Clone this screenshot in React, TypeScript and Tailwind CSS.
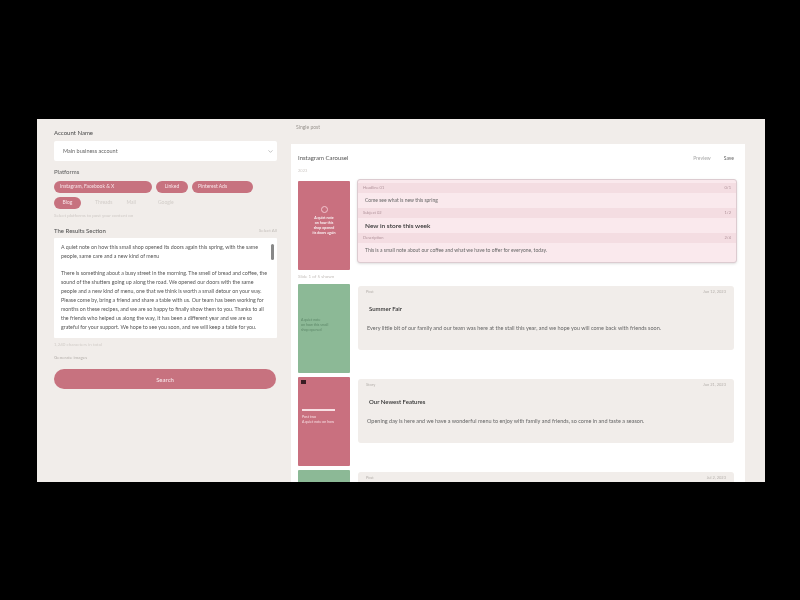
import React from "react";
import { ChevronDown } from "lucide-react";

function Thumb({ color, children }: { color: string; children?: React.ReactNode }) {
  return (
    <div className={`w-[52px] h-[89px] shrink-0 rounded-[1px] flex flex-col text-white ${color}`}>
      {children}
    </div>
  );
}

function PlainBox({ title, text, tag, time }: { title: string; text: string; tag: string; time: string }) {
  return (
    <div className="flex-1 h-[64px] mt-[2px] mr-[3px] bg-[#f1edea] rounded-[3px] px-[8px] pt-[3px]">
      <div className="flex justify-between text-[4px] leading-[6px] text-[#b5b0ac]">
        <span>{tag}</span>
        <span>{time}</span>
      </div>
      <div className="mt-[10px] ml-[3px] text-[6px] leading-[8px] font-semibold text-[#333]">{title}</div>
      <div className="mt-[11px] ml-[1px] text-[5.5px] leading-[8px] text-[#666] whitespace-nowrap">{text}</div>
    </div>
  );
}

function PinkRow({ label, time, children }: { label: string; time: string; children: React.ReactNode }) {
  return (
    <div>
      <div className="h-[10px] bg-[#f4dde2] px-[5px] flex justify-between items-center text-[4px] text-[#b0929a]">
        <span>{label}</span>
        <span>{time}</span>
      </div>
      <div className="h-[15px] px-[7px] flex items-center bg-[#fae9ed]">{children}</div>
    </div>
  );
}

export default function App() {
  return (
    <div className="w-[800px] h-[600px] bg-black pt-[119px] pl-[37px] overflow-hidden font-['Lato',sans-serif]">
      <div className="w-[728px] h-[363px] flex overflow-hidden bg-[#f1edea] blur-[0.7px]">
        <aside className="w-[250px] shrink-0 pl-[17px] pr-[10px] pt-[10px] flex flex-col">
          <div className="text-[6px] leading-[8px] font-medium text-[#555]">Account Name</div>
          <div className="mt-[4px] h-[20px] bg-white rounded-[2px] flex items-center justify-between pl-[9px] pr-[3px] text-[5.5px] text-[#666]">
            <span>Main business account</span>
            <ChevronDown size={7} className="text-[#999]" />
          </div>
          <div className="mt-[7px] text-[6px] leading-[8px] font-medium text-[#666]">Platforms</div>
          <div className="mt-[5px] flex gap-[4px]">
            <span className="h-[12px] w-[98px] rounded-full bg-[#c7727f] text-[#f8e4e8] text-[5px] flex items-center pl-[6px] whitespace-nowrap">Instagram, Facebook &amp; X</span>
            <span className="h-[12px] w-[32px] rounded-full bg-[#c7727f] text-[#f8e4e8] text-[5px] flex items-center justify-center">Linked</span>
            <span className="h-[12px] w-[61px] rounded-full bg-[#c7727f] text-[#f8e4e8] text-[5px] flex items-center pl-[6px]">Pinterest Ads</span>
          </div>
          <div className="mt-[4px] flex items-center gap-[14px] text-[5px] text-[#d2cdc9]">
            <span className="h-[12px] w-[27px] rounded-full bg-[#c7727f] text-[#f8e4e8] flex items-center justify-center">Blog</span>
            <span>Threads</span>
            <span>Mail</span>
            <span className="ml-[8px]">Google</span>
          </div>
          <div className="mt-[3px] text-[4.5px] leading-[7px] text-[#cfcac6]">Select platforms to post your content on</div>
          <div className="mt-[8px] flex justify-between items-center text-[6px] leading-[8px] font-medium text-[#555]">
            <span>The Results Section</span>
            <span className="text-[4.5px] font-normal text-[#c4bfbb]">Select All</span>
          </div>
          <div className="mt-[3px] relative h-[100px] bg-white overflow-hidden pl-[7px] pr-[8px] pt-[5px] text-[5.3px] leading-[9px] text-[#555] rounded-[1px]">
            <p className="pr-[4px]">A quiet note on how this small shop opened its doors again this spring, with the same people, same care and a new kind of menu</p>
            <p className="mt-[8px]">There is something about a busy street in the morning. The smell of bread and coffee, the sound of the shutters going up along the road. We opened our doors with the same people and a new kind of menu, one that we think is worth a small detour on your way. Please come by, bring a friend and share a table with us. Our team has been working for months on these recipes, and we are so happy to finally show them to you. Thanks to all the friends who helped us along the way, it has been a different year and we are so grateful for your support. We hope to see you soon, and we will keep a table for you.</p>
            <div className="absolute right-[3px] top-[6px] w-[3px] h-[16px] bg-[#888] rounded-full" />
          </div>
          <div className="mt-[3px] text-[4.5px] leading-[7px] text-[#d2cdc9]">1,240 characters in total</div>
          <div className="mt-[6px] text-[4.5px] leading-[7px] text-[#b5b0ac]">Generate images</div>
          <button className="mt-[8px] h-[20px] w-[222px] rounded-full bg-[#c7727f] text-[#f8e4e8] text-[6px] font-medium">Search</button>
        </aside>
        <main className="flex-1 pl-[4px] pt-[5px]">
          <div className="pl-[5px] text-[5px] leading-[7px] text-[#99948f]">Single post</div>
          <div className="mt-[13px] w-[454px] h-[340px] bg-white pl-[7px] pr-[8px] pt-[10px] overflow-hidden">
            <div className="flex justify-between items-center pr-[3px] text-[6px] leading-[8px] text-[#555]">
              <span>Instagram Carousel</span>
              <span className="flex gap-[13px] text-[5px] text-[#aaa]"><span>Preview</span><span className="text-[#666]">Save</span></span>
            </div>
            <div className="mt-[6px] text-[4px] leading-[6px] text-[#cfcac6]">2023</div>
            <div className="mt-[7px] flex gap-[7px] items-start">
              <Thumb color="bg-[#c9707f]">
                <div className="mx-auto mt-[25px] w-[7px] h-[7px] rounded-full border border-[#f3c5ce]" />
                <div className="mt-[2px] text-center text-[3.6px] leading-[5px] font-semibold px-[3px]">A quiet note<br />on how this<br />shop opened<br />its doors again</div>
              </Thumb>
              <div className="flex-1 h-[84px] -mt-[2px] rounded-[3px] border border-[#dccbd0] bg-[#fae9ed] shadow-sm overflow-hidden pt-[3px]">
                <PinkRow label="Headline 01" time="0/1">
                  <span className="text-[5px] text-[#666]">Come see what is new this spring</span>
                </PinkRow>
                <PinkRow label="Subject 02" time="1/2">
                  <span className="text-[6.5px] font-semibold text-[#333]">New in store this week</span>
                </PinkRow>
                <PinkRow label="Description" time="2/4">
                  <span className="text-[5px] text-[#666]">This is a small note about our coffee and what we have to offer for everyone, today.</span>
                </PinkRow>
              </div>
            </div>
            <div className="mt-[3px] text-[4.5px] leading-[7px] text-[#c4bfbb]">Slide 1 of 5 shown</div>
            <div className="mt-[4px] flex gap-[8px] items-start">
              <Thumb color="bg-[#8cb996]">
                <div className="mt-[33px] ml-[3px] text-[3.6px] leading-[5px] text-[#5d8768]">A quiet note<br />on how this small<br />shop opened</div>
              </Thumb>
              <PlainBox tag="Post" time="Jun 12, 2023" title="Summer Fair" text="Every little bit of our family and our team was here at the stall this year, and we hope you will come back with friends soon." />
            </div>
            <div className="mt-[4px] flex gap-[8px] items-start">
              <Thumb color="bg-[#c9707f]">
                <div className="mt-[3px] ml-[3px] w-[5px] h-[4px] bg-[#3a1d24]" />
                <div className="mt-[25px] ml-[4px] w-[33px] h-[2px] bg-[#f7dfe3]" />
                <div className="mt-[3px] ml-[4px] text-[3.6px] leading-[5px] text-[#f7dfe3]">Post two<br />A quiet note on how</div>
              </Thumb>
              <PlainBox tag="Story" time="Jun 21, 2023" title="Our Newest Features" text="Opening day is here and we have a wonderful menu to enjoy with family and friends, so come in and taste a season." />
            </div>
            <div className="mt-[4px] flex gap-[8px] items-start">
              <Thumb color="bg-[#8cb996]" />
              <PlainBox tag="Post" time="Jul 2, 2023" title="" text="" />
            </div>
          </div>
        </main>
      </div>
    </div>
  );
}
